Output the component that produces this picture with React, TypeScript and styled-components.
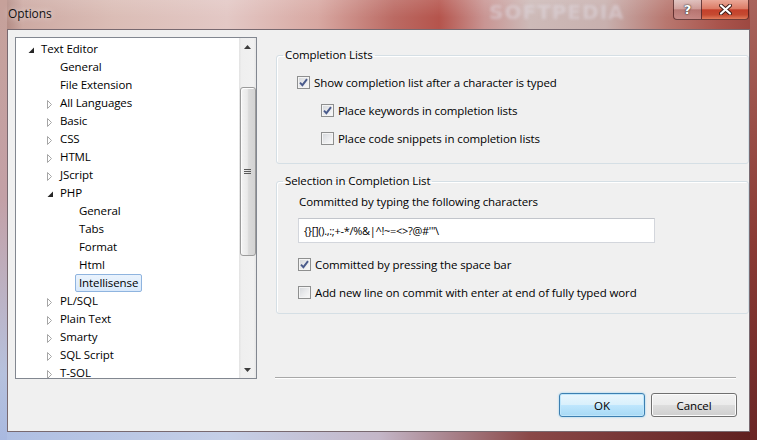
import React from 'react';
import styled, { createGlobalStyle, css } from 'styled-components';

type Expander = 'open' | 'closed';

interface TreeItem {
  label: string;
  level: number;
  expander?: Expander;
  selected?: boolean;
}

const treeItems: TreeItem[] = [
  { label: 'Text Editor', level: 0, expander: 'open' },
  { label: 'General', level: 1 },
  { label: 'File Extension', level: 1 },
  { label: 'All Languages', level: 1, expander: 'closed' },
  { label: 'Basic', level: 1, expander: 'closed' },
  { label: 'CSS', level: 1, expander: 'closed' },
  { label: 'HTML', level: 1, expander: 'closed' },
  { label: 'JScript', level: 1, expander: 'closed' },
  { label: 'PHP', level: 1, expander: 'open' },
  { label: 'General', level: 2 },
  { label: 'Tabs', level: 2 },
  { label: 'Format', level: 2 },
  { label: 'Html', level: 2 },
  { label: 'Intellisense', level: 2, selected: true },
  { label: 'PL/SQL', level: 1, expander: 'closed' },
  { label: 'Plain Text', level: 1, expander: 'closed' },
  { label: 'Smarty', level: 1, expander: 'closed' },
  { label: 'SQL Script', level: 1, expander: 'closed' },
  { label: 'T-SOL', level: 1, expander: 'closed' },
];

const GlobalStyle = createGlobalStyle`
  html, body {
    margin: 0;
    padding: 0;
    background: #fff;
  }
  body {
    font-family: "Open Sans", "Noto Sans", sans-serif;
    font-size: 11.5px;
    letter-spacing: -0.1px;
    color: #000;
  }
  * {
    box-sizing: border-box;
  }
`;

// Window chrome
const Window = styled.div`
  width: 757px;
  height: 440px;
  display: flex;
  flex-direction: column;
  padding: 0 7px 8px 7px;
  background:
    linear-gradient(180deg, #c6a19a 0%, #c3a0a6 45%, #b6c1dd 85%, #a9b9e0 100%) left / 7px 100% no-repeat,
    linear-gradient(180deg, #a9645c 0%, #8a3a34 55%, #6a2626 100%) right / 7px 100% no-repeat,
    linear-gradient(90deg, #aebee2 0%, #c5cfe7 30%, #c4b7c8 50%, #8a4848 70%, #5e1f1f 100%) bottom / 100% 8px no-repeat,
    linear-gradient(180deg, rgba(255, 255, 255, 0.12), rgba(255, 255, 255, 0) 60%) top / 100% 29px no-repeat,
    linear-gradient(
        90deg,
        #a98079 0%,
        #cdaaa3 3%,
        #dbbdb6 15%,
        #e3c8c5 30%,
        #d8a8a2 42%,
        #bb6a63 52%,
        #b5544c 58%,
        #c99593 64%,
        #cdbab8 70%,
        #c8b0ae 80%,
        #b8776f 88%,
        #a9544c 95%,
        #9a463f 100%
      )
      top / 100% 29px no-repeat,
    #b08880;
`;

const TitleBar = styled.div`
  position: relative;
  height: 29px;
  flex-shrink: 0;
  display: flex;
  justify-content: space-between;
  align-items: flex-start;
`;

const Title = styled.div`
  padding: 6px 0 0 1px;
  line-height: 16px;
  font-size: 12px;
  color: #111;
  text-shadow: 0 0 6px rgba(255, 255, 255, 0.8);
`;

const Watermark = styled.div`
  position: absolute;
  left: 482px;
  top: 1px;
  line-height: 22px;
  font-family: "DejaVu Sans", sans-serif;
  font-weight: bold;
  font-size: 20px;
  letter-spacing: 1px;
  color: rgba(225, 220, 228, 0.5);
  filter: blur(1.4px);
  pointer-events: none;
`;

const CaptionButtons = styled.div`
  display: flex;
  margin-right: 1px;
  height: 20px;
`;

const CaptionButton = styled.div<{ $variant: 'help' | 'close' }>`
  height: 20px;
  display: flex;
  align-items: center;
  justify-content: center;
  border: 1px solid rgba(70, 25, 25, 0.75);
  border-top: none;
  color: #fff;
  font-family: "DejaVu Sans", sans-serif;
  font-weight: bold;
  font-size: 13px;
  text-shadow: 0 0 1px #222, 0 0 2px #333;
  ${(p) =>
    p.$variant === 'close'
      ? css`
          width: 47px;
          border-left: none;
          border-radius: 0 0 4px 0;
          background: linear-gradient(180deg, #eaa898 0%, #dc7c66 45%, #c4402b 52%, #c54a31 78%, #e17b5b 100%);
        `
      : css`
          width: 29px;
          border-radius: 0 0 0 4px;
          background: linear-gradient(
            180deg,
            rgba(255, 255, 255, 0.55) 0%,
            rgba(240, 215, 215, 0.45) 45%,
            rgba(185, 125, 125, 0.5) 52%,
            rgba(215, 165, 165, 0.55) 100%
          );
        `}
`;

const Content = styled.div`
  flex: 1;
  display: flex;
  align-items: stretch;
  background: #f0f0f0;
  border: 1px solid rgba(80, 60, 70, 0.75);
  padding: 7px 0 14px 7px;
`;

// Tree
const Tree = styled.div`
  width: 242px;
  height: 342px;
  flex-shrink: 0;
  display: flex;
  background: #fff;
  border: 1px solid #828790;
`;

const TreeList = styled.div`
  flex: 1;
  padding-top: 2px;
  overflow: hidden;
`;

const TreeRow = styled.div<{ $level: number }>`
  height: 18px;
  display: flex;
  align-items: center;
  padding-left: ${(p) => 8 + p.$level * 19}px;
  white-space: nowrap;
`;

const ExpanderBox = styled.div`
  width: 13px;
  height: 18px;
  padding: 2px 0 0 4px;
  display: flex;
  align-items: center;
`;

const TreeLabel = styled.span<{ $selected?: boolean }>`
  height: 18px;
  line-height: 16px;
  padding: 0 3px;
  border: 1px solid transparent;
  border-radius: 2px;
  ${(p) =>
    p.$selected &&
    css`
      border-color: #8fb4df;
      background: linear-gradient(180deg, #eaf3fd 0%, #d9e9fb 100%);
    `}
`;

const ScrollBar = styled.div`
  width: 17px;
  display: flex;
  flex-direction: column;
  background: linear-gradient(90deg, #e2e2e2 0%, #efefef 15%, #f1f1f1 85%, #e6e6e6 100%);
`;

const ScrollArrow = styled.div`
  height: 17px;
  flex-shrink: 0;
  display: flex;
  align-items: center;
  justify-content: center;
`;

const ScrollTrack = styled.div`
  flex: 1;
  display: flex;
  flex-direction: column;
  align-items: center;
`;

const ScrollThumb = styled.div<{ $offset: number; $size: number }>`
  margin-top: ${(p) => p.$offset}px;
  width: 16px;
  height: ${(p) => p.$size}px;
  border: 1px solid #9b9b9b;
  border-radius: 3px;
  background: linear-gradient(90deg, #f4f4f4 0%, #e9e9e9 45%, #dadada 55%, #d3d3d3 100%);
  box-shadow: inset 1px 1px 0 #fcfcfc;
  display: flex;
  align-items: center;
  justify-content: center;
`;

// Options side
const OptionsColumn = styled.div`
  flex: 1;
  display: flex;
  flex-direction: column;
  margin-left: 19px;
`;

const GroupBox = styled.fieldset<{ $top: number }>`
  margin: ${(p) => p.$top}px 0 0 0;
  padding: 0;
  border: 1px solid #d5dfe5;
  border-radius: 3px;
  box-shadow: inset 1px 1px 0 #fff;
  min-width: 0;
`;

const Legend = styled.legend`
  margin-left: 6px;
  padding: 0 2px;
  line-height: 16px;
`;

const GroupBody = styled.div<{ $top: number; $indent: number; $bottom: number }>`
  display: flex;
  flex-direction: column;
  padding: ${(p) => p.$top}px 0 ${(p) => p.$bottom}px ${(p) => p.$indent}px;
`;

const CheckRow = styled.div<{ $indent?: number; $gap?: number }>`
  height: 20px;
  display: flex;
  align-items: center;
  gap: 4px;
  margin-left: ${(p) => p.$indent ?? 0}px;
  margin-top: ${(p) => p.$gap ?? 0}px;
  white-space: nowrap;
`;

const CheckBoxFrame = styled.div`
  width: 13px;
  height: 13px;
  flex-shrink: 0;
  border: 1px solid #8e8f8f;
  background: linear-gradient(135deg, #d3d6da 0%, #e9eaec 50%, #fafafa 100%);
  box-shadow: inset 0 0 0 1px #f4f4f4;
  display: flex;
  align-items: center;
  justify-content: center;
`;

const FieldLabel = styled.div`
  line-height: 16px;
  margin-left: 1px;
`;

const CharsInput = styled.div`
  width: 357px;
  height: 25px;
  margin-top: 8px;
  padding-left: 5px;
  display: flex;
  align-items: center;
  background: #fff;
  border: 1px solid #d3d6dc;
  border-top-color: #c2c5cb;
  font-size: 11px;
  letter-spacing: -0.3px;
  white-space: pre;
`;

const Footer = styled.div`
  margin-top: auto;
  display: flex;
  flex-direction: column;
`;

const Separator = styled.div`
  height: 2px;
  margin: 0 13px 0 -1px;
  border-top: 1px solid #a8a8a8;
  border-bottom: 1px solid #fff;
`;

const ButtonRow = styled.div`
  display: flex;
  justify-content: flex-end;
  gap: 6px;
  margin-top: 14px;
  padding-right: 12px;
`;

const DialogButton = styled.div<{ $default?: boolean }>`
  width: 86px;
  height: 24px;
  display: flex;
  align-items: center;
  justify-content: center;
  border-radius: 3px;
  border: 1px solid #707070;
  background: linear-gradient(180deg, #f2f2f2 0%, #ebebeb 48%, #dddddd 52%, #cfcfcf 100%);
  box-shadow: inset 0 0 0 1px #fbfbfb;
  ${(p) =>
    p.$default &&
    css`
      border-color: #3c7fb1;
      background: linear-gradient(180deg, #eaf6fd 0%, #d9f0fc 48%, #bee6fd 52%, #a7d9f5 100%);
      box-shadow: inset 0 0 0 1px #bfe6fb, 0 0 2px #7ec8f0;
    `}
`;

function Triangle({ kind }: { kind: Expander }) {
  if (kind === 'open') {
    return (
      <svg width="7" height="7" viewBox="0 0 7 7">
        <polygon points="6,0.5 6,6 0.5,6" fill="#262626" />
      </svg>
    );
  }
  return (
    <svg width="6" height="9" viewBox="0 0 6 9">
      <polygon points="0.5,0.5 4.5,4.5 0.5,8.5" fill="#fff" stroke="#a6a6a6" strokeWidth="1" />
    </svg>
  );
}

function CheckBox({ checked }: { checked?: boolean }) {
  return (
    <CheckBoxFrame>
      {checked && (
        <svg width="9" height="9" viewBox="0 0 9 9">
          <path d="M1 4.6 L3.4 7.2 L8 1.2" fill="none" stroke="#4a5b8c" strokeWidth="1.9" />
        </svg>
      )}
    </CheckBoxFrame>
  );
}

function Option({
  label,
  checked,
  indent,
  gap,
}: {
  label: string;
  checked?: boolean;
  indent?: number;
  gap?: number;
}) {
  return (
    <CheckRow $indent={indent} $gap={gap}>
      <CheckBox checked={checked} />
      <span>{label}</span>
    </CheckRow>
  );
}

function OptionsTree() {
  return (
    <Tree>
      <TreeList>
        {treeItems.map((item, i) => (
          <TreeRow key={i} $level={item.level}>
            <ExpanderBox>{item.expander && <Triangle kind={item.expander} />}</ExpanderBox>
            <TreeLabel $selected={item.selected}>{item.label}</TreeLabel>
          </TreeRow>
        ))}
      </TreeList>
      <ScrollBar>
        <ScrollArrow>
          <svg width="7" height="4" viewBox="0 0 7 4">
            <polygon points="0,4 3.5,0 7,4" fill="#3c3c3c" />
          </svg>
        </ScrollArrow>
        <ScrollTrack>
          <ScrollThumb $offset={32} $size={169}>
            <svg width="7" height="7" viewBox="0 0 7 7">
              <path d="M0 1.5h7M0 3.5h7M0 5.5h7" stroke="#5a5a5a" strokeWidth="1" />
            </svg>
          </ScrollThumb>
        </ScrollTrack>
        <ScrollArrow>
          <svg width="7" height="4" viewBox="0 0 7 4">
            <polygon points="0,0 7,0 3.5,4" fill="#3c3c3c" />
          </svg>
        </ScrollArrow>
      </ScrollBar>
    </Tree>
  );
}

export default function App() {
  return (
    <>
      <GlobalStyle />
      <Window>
        <TitleBar>
          <Title>Options</Title>
          <Watermark>SOFTPEDIA</Watermark>
          <CaptionButtons>
            <CaptionButton $variant="help">?</CaptionButton>
            <CaptionButton $variant="close">
              <svg width="13" height="11" viewBox="0 0 13 11">
                <path d="M2 1.5 L11 9.5 M11 1.5 L2 9.5" stroke="#3a1a16" strokeWidth="4" strokeLinecap="round" />
                <path d="M2 1.5 L11 9.5 M11 1.5 L2 9.5" stroke="#fff" strokeWidth="2.2" strokeLinecap="round" />
              </svg>
            </CaptionButton>
          </CaptionButtons>
        </TitleBar>
        <Content>
          <OptionsTree />
          <OptionsColumn>
            <GroupBox $top={10}>
              <Legend>Completion Lists</Legend>
              <GroupBody $top={9} $indent={20} $bottom={15}>
                <Option label="Show completion list after a character is typed" checked />
                <Option label="Place keywords in completion lists" checked indent={24} gap={8} />
                <Option label="Place code snippets in completion lists" indent={24} gap={8} />
              </GroupBody>
            </GroupBox>
            <GroupBox $top={9}>
              <Legend>Selection in Completion List</Legend>
              <GroupBody $top={5} $indent={21} $bottom={11}>
                <FieldLabel>Committed by typing the following characters</FieldLabel>
                <CharsInput>{'{}[]().,:;+-*/%&|^!~=<>?@#\'"\\'}</CharsInput>
                <Option label="Committed by pressing the space bar" checked gap={11} />
                <Option label="Add new line on commit with enter at end of fully typed word" gap={8} />
              </GroupBody>
            </GroupBox>
            <Footer>
              <Separator />
              <ButtonRow>
                <DialogButton $default>OK</DialogButton>
                <DialogButton>Cancel</DialogButton>
              </ButtonRow>
            </Footer>
          </OptionsColumn>
        </Content>
      </Window>
    </>
  );
}
